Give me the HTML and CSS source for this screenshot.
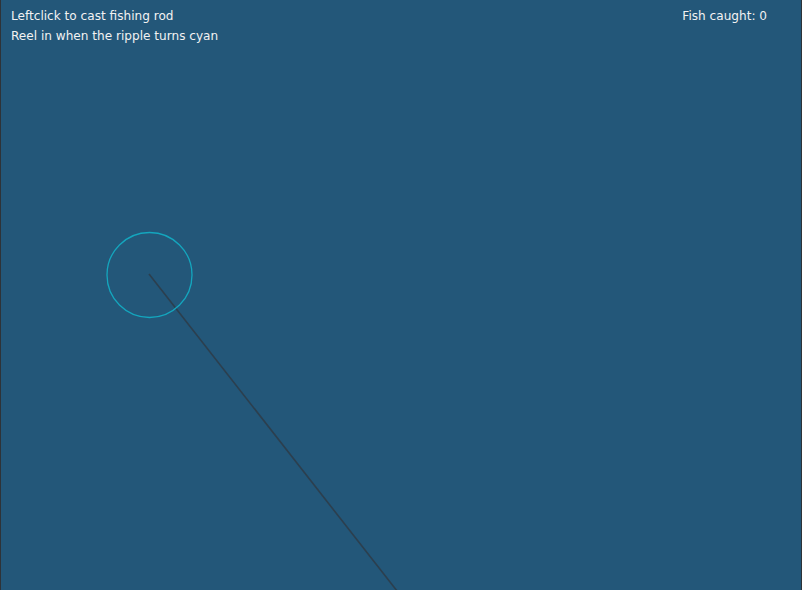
FILE: index.html
```html
<!DOCTYPE html>
<html>
<head>
<meta charset="utf-8">
<link rel="stylesheet" href="styles.css">
</head>
<body>
<div class="game">
  <svg class="scene" width="800" height="590" viewBox="0 0 800 590">
    <line x1="148" y1="274" x2="400" y2="596" stroke="#2c3f4e" stroke-width="1.6"/>
    <circle cx="148.5" cy="275" r="42.5" fill="none" stroke="#14a6be" stroke-width="1.3"/>
  </svg>
  <div class="hud">
    <div class="help">
      <div>Leftclick to cast fishing rod</div>
      <div>Reel in when the ripple turns cyan</div>
    </div>
    <div class="score">Fish caught: 0</div>
  </div>
</div>
</body>
</html>
```
FILE: styles.css
```css
html, body {
  margin: 0;
  padding: 0;
  background: #2e3338;
  width: 802px;
  height: 590px;
  overflow: hidden;
}
.game {
  position: relative;
  width: 800px;
  height: 590px;
  margin-left: 1px;
  background: #235779;
  font-family: "DejaVu Sans", sans-serif;
  font-size: 12.1px;
  color: #f2f2f2;
}
.scene {
  position: absolute;
  left: 0;
  top: 0;
}
.hud {
  position: relative;
  display: flex;
  justify-content: space-between;
  padding: 6px 34px 0 10px;
  line-height: 20px;
}
```
